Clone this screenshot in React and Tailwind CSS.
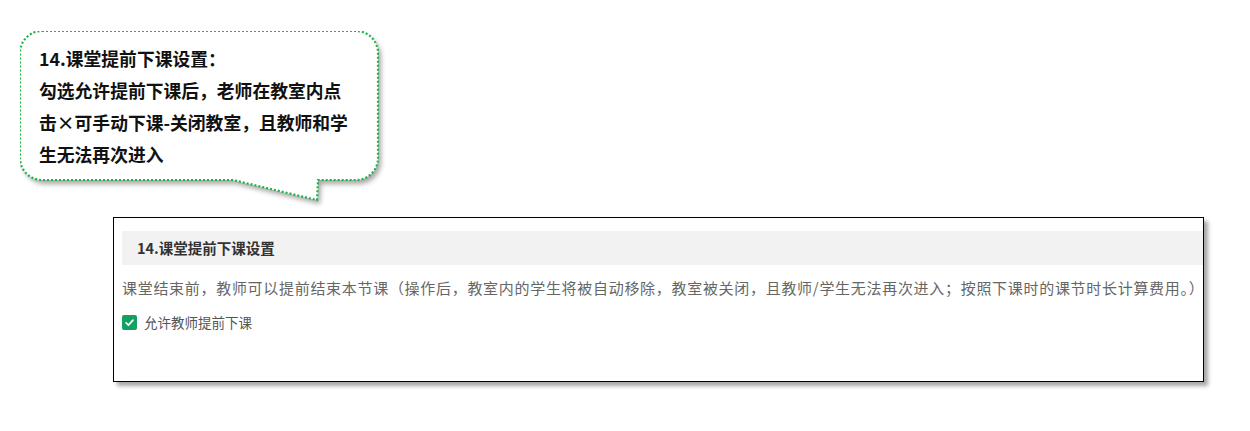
export default function App() {
  return (
    <div className="w-[1250px] h-[431px] bg-white overflow-hidden" style={{ fontFamily: '"Noto Sans CJK SC", "Noto Sans", sans-serif' }}>
      <div className="relative ml-[20px] mt-[31px] w-[362px] h-[172px]">
        <svg className="absolute left-0 top-0" width="372" height="180" viewBox="20 31 372 180">
          <defs>
            <filter id="sh" x="-10%" y="-10%" width="130%" height="130%">
              <feDropShadow dx="3" dy="4" stdDeviation="2.5" floodColor="#000" floodOpacity="0.35" />
            </filter>
          </defs>
          <path
            d="M 42 31 H 356 A 22 22 0 0 1 378 53 V 158 A 22 22 0 0 1 356 180 H 318 L 317 200 L 233 180 H 42 A 22 22 0 0 1 20 158 V 53 A 22 22 0 0 1 42 31 Z"
            fill="#fff"
            filter="url(#sh)"
          />
          <path
            d="M 42 31 H 356 A 22 22 0 0 1 378 53 V 158 A 22 22 0 0 1 356 180 H 318 L 317 200 L 233 180 H 42 A 22 22 0 0 1 20 158 V 53 A 22 22 0 0 1 42 31 Z"
            fill="none"
            stroke="#1fb24a"
            strokeWidth="2.2"
            strokeDasharray="2 2"
          />
        </svg>
        <div className="relative pl-[19px] pt-[11px] text-[17.8px] leading-[32px] font-bold text-[#111]">
          <div>14.课堂提前下课设置：</div>
          <div>勾选允许提前下课后，老师在教室内点</div>
          <div>击×可手动下课-关闭教室，且教师和学</div>
          <div>生无法再次进入</div>
        </div>
      </div>
      <div className="ml-[113px] mt-[14px] w-[1091px] h-[165px] border border-black bg-white shadow-[4px_4px_4px_rgba(0,0,0,0.35)] pl-[8px] pt-[13px]">
        <div className="h-[34px] bg-[#f2f2f2] flex items-center pl-[15px] text-[14.5px] font-bold text-[#333]">
          14.课堂提前下课设置
        </div>
        <div className="mt-[12px] text-[15px] tracking-[0.7px] leading-[22px] text-[#666] whitespace-nowrap">
          课堂结束前，教师可以提前结束本节课（操作后，教室内的学生将被自动移除，教室被关闭，且教师/学生无法再次进入；按照下课时的课节时长计算费用。）
        </div>
        <div className="mt-[13px] flex items-center gap-[7px]">
          <span className="w-[15px] h-[15px] rounded-[2px] bg-[#14a062] flex items-center justify-center">
            <svg width="11" height="11" viewBox="0 0 12 12">
              <path d="M2.2 6.3 L4.8 8.8 L9.8 3.4" fill="none" stroke="#fff" strokeWidth="1.8" strokeLinecap="round" strokeLinejoin="round" />
            </svg>
          </span>
          <span className="text-[13.5px] leading-[20px] text-[#555]">允许教师提前下课</span>
        </div>
      </div>
    </div>
  );
}
